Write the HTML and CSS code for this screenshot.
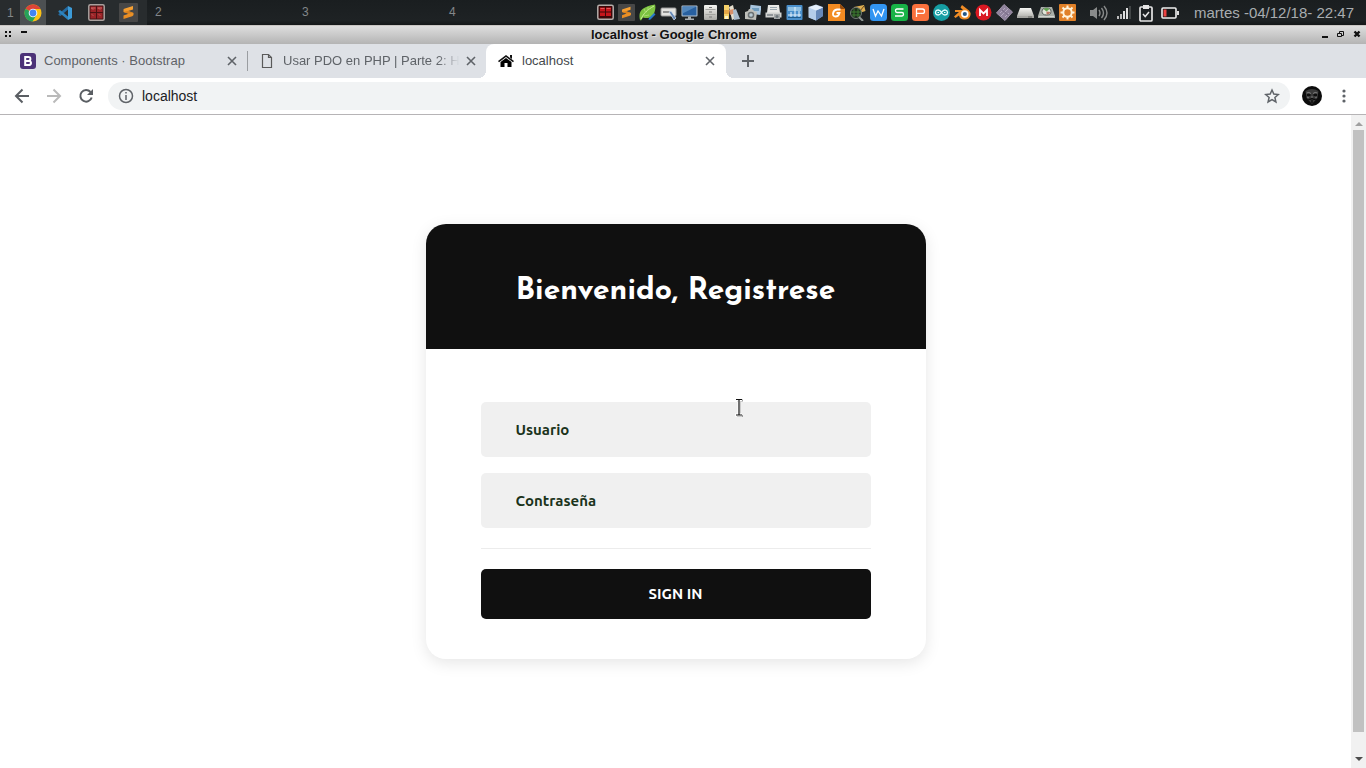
FILE: index.html
```
<!DOCTYPE html>
<html lang="es">
<head>
<meta charset="utf-8">
<title>localhost</title>
<link rel="stylesheet" href="styles.css">
</head>
<body>
<svg class="defs" width="0" height="0" aria-hidden="true">
  <defs>
    <linearGradient id="silver" x1="0" y1="0" x2="0" y2="1"><stop offset="0" stop-color="#f5f5f2"/><stop offset="1" stop-color="#aaaaa6"/></linearGradient>
    <linearGradient id="cubeblue" x1="0" y1="0" x2="1" y2="1"><stop offset="0" stop-color="#e0ecfa"/><stop offset="1" stop-color="#7796c4"/></linearGradient>
    <linearGradient id="orange" x1="0" y1="0" x2="0" y2="1"><stop offset="0" stop-color="#f9a536"/><stop offset="1" stop-color="#e5871f"/></linearGradient>
    <symbol id="redgrid" viewBox="0 0 17 17">
      <rect x=".8" y=".8" width="15.400" height="15.400" rx="1.500" fill="#4a1214" stroke="#a9a19e" stroke-width="1.500"/>
      <path d="M2.500 2.500H8V8H2.500zM9 2.500h5.500V8H9zM2.500 9H8v5.500H2.500zM9 9h5.500v5.500H9z" fill="#9c2428"/>
      <path d="M3 3h4.500v2H3zM9.500 3H14v2H9.500z" fill="#b84648"/>
      <path d="M4 4.500l1 1M11 4.500l1 1M4 10.500l1 1M11 10.500l1 1" stroke="#dc9a96" stroke-width=".8"/>
    </symbol>
    <symbol id="redwide" viewBox="0 0 17 17">
      <rect x=".8" y="1.300" width="15.400" height="13.900" rx="1.500" fill="#3b0809" stroke="#b3adaa" stroke-width="1.500"/>
      <path d="M3 3.500h5v4H3zM9 3.500h5v4H9zM3 8.500h5v3.500H3zM9 8.500h5v3.500H9z" fill="#c5151b"/>
      <path d="M3.500 4h4v1h-4zM9.500 4h4v1h-4z" fill="#e4565a"/>
    </symbol>
    <symbol id="sublime" viewBox="0 0 19 19">
      <rect width="19" height="19" rx="1" fill="#474747"/>
      <path d="M14 3L5.200 5.800Q4.500 6 4.500 6.800V9l5.200 1.700L4.500 12.500V16l8.700-2.800q1.300-.4 1.300-1.400V10L9.200 8.100 14 6.500z" fill="url(#orange)"/>
      <path d="M4.500 9l5.200 1.700 4.800-.7-5.300-1.900z" fill="#d9801d"/>
    </symbol>
    <symbol id="close" viewBox="0 0 10 10"><path d="M1 1l8 8M9 1L1 9" stroke="#5f6368" stroke-width="1.600"/></symbol>
  </defs>
</svg>

<header class="panel">
  <nav class="workspaces" aria-label="Espacios de trabajo">
    <div class="workspace workspace-active">
      <span>1</span>
      <button class="task task-focused" aria-label="Google Chrome">
        <svg width="18" height="18" viewBox="0 0 18 18"><circle cx="9" cy="9" r="8.500" fill="#fbc116"/><path d="M9 9L1.600 4.700A8.500 8.500 0 0 1 16.500 5H9z" fill="#dc4437"/><path d="M1.600 4.700A8.500 8.500 0 0 0 8.500 17.500L12.500 11 9 9z" fill="#27a25a"/><circle cx="9" cy="9" r="4.300" fill="#fff"/><circle cx="9" cy="9" r="3.400" fill="#4285f4"/></svg>
      </button>
      <button class="task" aria-label="Visual Studio Code">
        <svg width="16" height="16" viewBox="0 0 16 16"><path d="M11 1l4 2v10l-4 2z" fill="#3c9bd8"/><path d="M11 1v3.500L3.500 11 1.500 10V9z" fill="#246aa0"/><path d="M1.500 6L3 5l8 6.500V15L1.500 7z" fill="#2d83bd"/></svg>
      </button>
      <button class="task" aria-label="Terminal"><svg width="17" height="17"><use href="#redgrid"/></svg></button>
      <button class="task" aria-label="Sublime Text"><svg width="19" height="19"><use href="#sublime"/></svg></button>
    </div>
    <div class="workspace"><span>2</span></div>
    <div class="workspace"><span>3</span></div>
    <div class="workspace"><span>4</span></div>
  </nav>

  <div class="launchers">
    <svg viewBox="0 0 17 17"><use href="#redwide"/></svg>
    <svg viewBox="0 0 17 17"><use href="#sublime"/></svg>
    <svg viewBox="0 0 17 17"><path d="M1 16C-1 8 2 3 16 .5c1 3 0 6-1 9-2 5-7 5-11 4l-2 3z" fill="#7cc242"/><path d="M2 15C5 9 8 6 15 2" stroke="#c9ee98" fill="none"/><path d="M5 5l2 4M9 3v3M5 12l5-1" stroke="#a5dc6c"/><path d="M10 14l5-5 1.500 1.500-5 5-2 .5z" fill="#2878c8"/></svg>
    <svg viewBox="0 0 17 17"><rect x="1" y="4" width="15" height="8" rx="1" fill="#e3e3e0" stroke="#999"/><path d="M3 8h7" stroke="#777" stroke-width="1.500"/><path d="M9 8l2-1 5 7-2 2z" fill="#6386b5" stroke="#dce5ef" stroke-width=".7"/></svg>
    <svg viewBox="0 0 17 17"><rect x=".5" y="1.500" width="16" height="11" rx="1" fill="#b9c6d2"/><rect x="1.500" y="2.500" width="14" height="9" fill="#2860a0"/><path d="M1.500 2.500h14L1.500 9.500z" fill="#5287bd"/><path d="M7 12.500h3v2h3V16H4v-1.500h3z" fill="#a9adb0"/></svg>
    <svg viewBox="0 0 17 17"><rect x="2" y="1" width="13" height="15" rx="1" fill="url(#silver)"/><path d="M3.500 5.500h10M3.500 10.500h10" stroke="#a5a5a1"/><path d="M7 3.500h3M7 8h3M7 13h3" stroke="#777" stroke-width="1.200"/></svg>
    <svg viewBox="0 0 17 17"><path d="M1 1h5v14H1z" fill="#f5d16a"/><path d="M1 6h5v4H1z" fill="#e5a848"/><path d="M6 3l4-2 3 13-4 2z" fill="#e6dfcf"/><path d="M6 6l5-1 1 4-5 2z" fill="#d8906a"/><path d="M10 6l3-1 4 10-6 1z" fill="#a9bacb"/><path d="M2 12h3v3H2z" fill="#fff4c5"/></svg>
    <svg viewBox="0 0 17 17"><rect x="6" y="1" width="11" height="9" fill="#a8c5de" transform="rotate(7 9 5)"/><path d="M8 4h7v3H8z" fill="#6e9cbe"/><path d="M1 8l3-1 1-2 4 .5 1 1.500 3 1-1 8-11-1z" fill="#bebfba"/><circle cx="7" cy="11" r="3.300" fill="#6b7173"/><circle cx="7" cy="11" r="1.800" fill="#b9cbd4"/></svg>
    <svg viewBox="0 0 17 17"><path d="M3 1h11l1 8H2z" fill="#e9e9e6"/><path d="M5 3.500h7M5 5.500h7" stroke="#9ba8b0"/><path d="M.5 8.500h16v5H.5z" fill="#d1d2d0"/><path d="M2 11h6" stroke="#7b8287" stroke-width="1.500"/><path d="M9 10h6v5H9z" fill="#a4a8a9"/><circle cx="12" cy="12.500" r="1.500" fill="#6d767b"/></svg>
    <svg viewBox="0 0 17 17"><rect x=".5" y="1" width="16" height="15" rx="1" fill="#4a90cc"/><path d="M2 3h13v4H2z" fill="#90c1e4"/><path d="M2 11h13M5 14V8M9 14V3M13 14V7" stroke="#e6f3fd"/><path d="M2 13.500h13" stroke="#225d8d"/></svg>
    <svg viewBox="0 0 17 17"><path d="M1.500 3L9 .5 16 3v9l-7 4.500-7.500-3z" fill="url(#cubeblue)"/><path d="M2 3.500l7 3v10L2 13.500z" fill="#b5cdea"/><path d="M9 6.500l7-3V12l-7 4.500z" fill="#6688b9"/><path d="M2 3.500l7-2.500 7 2.500-7 3z" fill="#e5effb"/></svg>
    <svg viewBox="0 0 17 17"><path d="M0 0h12l5 5v12H0z" fill="#f28b22"/><path d="M12 0l5 5h-5z" fill="#944a0c"/><path d="M12.500 5.500H9Q5.500 6 5 9.500 4.800 12.500 7.500 12.500q3.200 0 4-3.500H8.500" fill="none" stroke="#fff" stroke-width="1.800"/></svg>
    <svg viewBox="0 0 17 17"><path d="M5 3l10-2 1.500 6-9 3z" fill="#dcae51"/><path d="M6 4l5 3 4-5" stroke="#6b4819" fill="none"/><circle cx="7" cy="9" r="5.500" fill="#1c2d1c" stroke="#737c76"/><path d="M5 5v8M9 5v8M2 8h10M3 11h8" stroke="#3f7e30"/><path d="M10 13l4 4" stroke="#909894" stroke-width="2"/></svg>
    <svg viewBox="0 0 17 17"><rect width="17" height="17" rx="3.500" fill="#3295f2"/><path d="M3 5l2.500 7L8 7l3.500 5L14 5" fill="none" stroke="#fff" stroke-width="1.300"/></svg>
    <svg viewBox="0 0 17 17"><rect width="17" height="17" rx="3.500" fill="#18b347"/><path d="M12.500 5H6q-1.500 0-1.500 1.700T6 8.500h5q1.500 0 1.500 1.700T11 12H4" fill="none" stroke="#fff" stroke-width="1.300"/></svg>
    <svg viewBox="0 0 17 17"><rect width="17" height="17" rx="3.500" fill="#fa713d"/><path d="M4.500 13V5h6q2 0 2 2.200t-2 2.200h-6" fill="none" stroke="#fff" stroke-width="1.300"/></svg>
    <svg viewBox="0 0 17 17"><circle cx="8.500" cy="8.500" r="8.500" fill="#159da3"/><path d="M8.500 8.500C6 4.500 2.500 6 2.500 8.500s3.500 4 6 0 6-2.500 6 0-3.500 4-6 0z" fill="none" stroke="#e9ffff" stroke-width="1.300"/><path d="M4.500 8.500h1.500M11 8.500h1.500" stroke="#fff"/></svg>
    <svg viewBox="0 0 17 17"><path d="M8 1l7 5.500q2 2 1.500 4.500-1 4.500-6 4.500T5 11.500L1.500 14 0 12.500 5 8H1V6h8L6.500 3.500z" fill="#ef8b25"/><circle cx="10.800" cy="10" r="3.700" fill="#fff"/><circle cx="10.800" cy="10" r="2.100" fill="#265787"/></svg>
    <svg viewBox="0 0 17 17"><circle cx="8.500" cy="8.500" r="8" fill="#da1822"/><path d="M5 12V6l3.500 3.500L12 6v6" fill="none" stroke="#fff" stroke-width="1.800"/></svg>
    <svg viewBox="0 0 17 17"><path d="M8 .5L16.500 8 9 16.500.5 9z" fill="#8f829c" stroke="#a194ab"/><path d="M4 9l5-5M5 12l7-7M9 13l4-4" stroke="#b5a9c0"/><path d="M6 6l6 5" stroke="#766984"/></svg>
    <svg viewBox="0 0 17 17"><path d="M3 4h11l3 8v2H0v-2z" fill="url(#silver)"/><path d="M0 12h17v2H0z" fill="#a5a5a1"/><path d="M11 13h4" stroke="#60625f"/></svg>
    <svg viewBox="0 0 17 17"><path d="M3 3h11l3 9v2H0v-2z" fill="#a9afa8"/><ellipse cx="8.500" cy="7.500" rx="4.500" ry="3.500" fill="#e1e6d9" stroke="#5e6360"/><path d="M8.500 7.500L5.500 5q3-2 6 0z" fill="#62a551"/><path d="M8.500 7.500l4 .5q-1 2.500-4 2.500z" fill="#bc7464"/><path d="M1 12.500h15" stroke="#d2d2cf"/></svg>
    <svg viewBox="0 0 17 17"><rect width="17" height="17" rx="1" fill="#e18128"/><circle cx="8.500" cy="8.500" r="4.200" fill="none" stroke="#fff4db" stroke-width="2"/><path d="M8.500 1.500v3M8.500 12.500v3M1.500 8.500h3M12.500 8.500h3M3.500 3.500l2 2M11.500 11.500l2 2M13.500 3.500l-2 2M5.500 11.500l-2 2" stroke="#fff4db" stroke-width="2"/></svg>
  </div>

  <div class="indicators">
    <svg width="20" height="16" viewBox="0 0 20 16"><path d="M1 5h3l4-3v12l-4-3H1z" fill="#898b8b"/><path d="M10 5q2 3 0 6M12.500 3q4 5 0 10M15 1q6 7 0 14" fill="none" stroke="#898b8b" stroke-width="1.400"/></svg>
    <svg width="14" height="14" viewBox="0 0 14 14"><path d="M0 10h2v3H0zM3 8h2v5H3z" fill="#bbb"/><path d="M6 5h2v8H6zM9 2h2v11H9z" fill="#ddd"/><path d="M12 0h2v13h-2z" fill="#414546"/></svg>
    <svg width="14" height="18" viewBox="0 0 14 18"><rect x="1" y="3" width="12" height="14" rx="1" fill="none" stroke="#e5e5e5" stroke-width="1.700"/><path d="M4 1h6v4H4z" fill="#e5e5e5"/><path d="M4 10l2.200 2.500L10 8" fill="none" stroke="#e5e5e5" stroke-width="1.500"/></svg>
    <svg width="18" height="12" viewBox="0 0 18 12"><rect x="1" y="1" width="14" height="10" rx="1" fill="#171a1b" stroke="#eee" stroke-width="1.600"/><path d="M2.500 2.500h3v7h-3z" fill="#ec4241"/><path d="M16 4h2v4h-2z" fill="#ddd"/></svg>
  </div>
  <time class="clock">martes -04/12/18- 22:47</time>
</header>

<div class="titlebar">
  <div class="window-left"><svg width="30" height="12" viewBox="0 0 30 12" fill="#111"><path d="M0 3h2v2H0zM4 3h2v2H4zM0 7h2v2H0zM4 7h2v2H4zM16 3h6v2h-6z"/></svg></div>
  <strong>localhost - Google Chrome</strong>
  <div class="window-right">
    <button aria-label="Minimizar"><svg width="8" height="8"><path d="M1 6h6v2H1z" fill="#111"/></svg></button>
    <button aria-label="Restaurar"><svg width="8" height="8" fill="none" stroke="#111"><path d="M2.500 3V1.500h4v4H5M.5 3.500h4v3h-4z"/></svg></button>
    <button aria-label="Cerrar ventana"><svg width="8" height="8"><path d="M1.500 1.500l5 5M6.500 1.500l-5 5" stroke="#111" stroke-width="2.400"/></svg></button>
  </div>
</div>

<div class="tabs">
  <div class="tab tab-divided">
    <svg width="16" height="16" viewBox="0 0 16 16"><rect width="16" height="16" rx="3" fill="#4c3278"/><path d="M5.200 3.900v8.200h3.300q2.500 0 2.500-2.100T8.500 8H5.200h3q2.200 0 2.200-2.100T8 3.900z" fill="none" stroke="#fff" stroke-width="2"/></svg>
    <button class="tab-title">Components · Bootstrap</button>
    <button class="tab-close" aria-label="Cerrar pestaña"><svg width="10" height="10"><use href="#close"/></svg></button>
  </div>
  <div class="tab">
    <svg width="16" height="16" viewBox="0 0 16 16" fill="none" stroke="#5a5a5a" stroke-width="1.200"><path d="M3.500 1.500h6l3 3v10h-9zM9.500 1.500v3h3"/></svg>
    <button class="tab-title tab-fade">Usar PDO en PHP | Parte 2: H</button>
    <button class="tab-close" aria-label="Cerrar pestaña"><svg width="10" height="10"><use href="#close"/></svg></button>
  </div>
  <div class="tab tab-active">
    <svg width="16" height="16" viewBox="0 0 16 16"><path d="M0 8l8-6 8 6-1 1.300-7-5.200-7 5.200z" fill="#111"/><path d="M12 2h2v4l-2-1.500z" fill="#111"/><path d="M2.500 9L8 5l5.500 4v5H9.500v-4h-3v4h-4z" fill="#000"/></svg>
    <button class="tab-title">localhost</button>
    <button class="tab-close" aria-label="Cerrar pestaña"><svg width="10" height="10"><use href="#close"/></svg></button>
  </div>
  <button class="new-tab" aria-label="Nueva pestaña"><svg width="12" height="12"><path d="M6 0v12M0 6h12" stroke="#5f6368" stroke-width="2"/></svg></button>
</div>

<div class="toolbar">
  <button class="tool" aria-label="Atrás"><svg width="16" height="16" fill="none" stroke="#5a5e63" stroke-width="2"><path d="M15 8H2M8.500 1.500L2 8l6.500 6.500"/></svg></button>
  <button class="tool" aria-label="Adelante"><svg width="16" height="16" fill="none" stroke="#bababa" stroke-width="2"><path d="M1 8h13M7.500 1.500L14 8l-6.500 6.500"/></svg></button>
  <button class="tool" aria-label="Recargar"><svg width="16" height="16"><path d="M12.500 4A5.800 5.800 0 1 0 13.700 9.500" fill="none" stroke="#5a5e63" stroke-width="2"/><path d="M15 1v6H9z" fill="#5a5e63"/></svg></button>
  <div class="omnibox">
    <svg width="16" height="16" fill="none" stroke="#5f6368" stroke-width="1.500"><circle cx="8" cy="8" r="6.500"/><path d="M8 7v5M8 4v1.600"/></svg>
    <input type="text" aria-label="Dirección" value="localhost">
    <button class="star" aria-label="Marcador"><svg width="16" height="16" fill="none" stroke="#5f6368" stroke-width="1.500"><path d="M8 2l1.800 4.100 4.500.4-3.400 3 1 4.400L8 11.600l-3.900 2.300 1-4.400-3.400-3 4.500-.4z"/></svg></button>
  </div>
  <button class="avatar" aria-label="Perfil"><svg width="20" height="20"><circle cx="10" cy="10" r="10" fill="#0c0c0c"/><path d="M3.500 5q6.500-4 13 0l-1 7-5.500 6-5.500-6z" fill="#3a3a3a"/><path d="M4.500 7q2.500-1.500 4.500.5M11 7.500q2-2 4.500-.5" fill="none" stroke="#7b7b7b"/><path d="M5 9h3.500M11.500 9H15" stroke="#020202" stroke-width="1.500"/><path d="M6 13q2 1 4-.5 2 1.500 4 .5M10 14v3" fill="none" stroke="#090909" stroke-width="1.300"/><path d="M5 11l2 1M15 11l-2 1M9 11h2" stroke="#777"/></svg></button>
  <button class="menu" aria-label="Menú"><svg width="4" height="14" fill="#5f6368"><circle cx="2" cy="2" r="1.600"/><circle cx="2" cy="7" r="1.600"/><circle cx="2" cy="12" r="1.600"/></svg></button>
</div>

<div class="viewport">
  <main class="page">
    <form class="card">
      <h1>Bienvenido, Registrese</h1>
      <div class="fields">
        <input class="field" type="text" placeholder="Usuario" aria-label="Usuario">
        <input class="field" type="password" placeholder="Contraseña" aria-label="Contraseña">
        <hr>
        <button class="submit" type="button">SIGN IN</button>
      </div>
      <svg class="pointer" width="10" height="19" viewBox="0 0 10 19"><path d="M3 2.500h6M6 3v14M3 18h6" fill="none" stroke="#999" stroke-width="2"/><path d="M1 1.500h7M5 2v15M1 17h7" fill="none" stroke="#fff" stroke-width="3"/><path d="M2 1.500h6M5 2v15M2 17h6" fill="none" stroke="#111" stroke-width="1.200"/></svg>
    </form>
  </main>
  <div class="scrollbar" aria-hidden="true">
    <svg width="8" height="4"><path d="M0 4l4-4 4 4z" fill="#a0a0a0"/></svg>
    <div class="thumb"></div>
    <svg width="8" height="4"><path d="M0 0h8L4 4z" fill="#4d4d4d"/></svg>
  </div>
</div>
</body>
</html>
```
FILE: styles.css
```
* { box-sizing: border-box; }

body {
  display: flex;
  flex-direction: column;
  height: 100vh;
  margin: 0;
  overflow: hidden;
  background: #fff;
  font-family: "Liberation Sans", Arial, sans-serif;
}

button {
  display: flex;
  align-items: center;
  justify-content: center;
  flex: none;
  padding: 0;
  border: 0;
  background: none;
  font: inherit;
  color: inherit;
}

svg { display: block; flex: none; }
.defs { position: absolute; }

/* Desktop panel */
.panel {
  display: flex;
  align-items: center;
  flex: none;
  height: 25px;
  padding-right: 12px;
  background: linear-gradient(#1a1e20, #1e2224 80%, #141718);
  color: #83878a;
}

.workspaces { display: flex; height: 100%; }

.workspace {
  display: flex;
  align-items: center;
  width: 147px;
  padding: 0 0 2px 8px;
  font-size: 12px;
}

.workspace-active { gap: 6px; padding: 0 0 0 7px; background: #282c2e; }

.task { width: 26px; height: 25px; }
.task-focused { background: #4c5052; }

.launchers { display: flex; gap: 4px; margin-left: auto; }
.launchers svg { width: 17px; height: 17px; }

.indicators {
  display: flex;
  align-items: center;
  gap: 8px;
  margin: 0 15px 0 13px;
}

.clock { font-size: 15px; color: #a9adb0; white-space: nowrap; }

/* Window title */
.titlebar {
  display: grid;
  grid-template-columns: 1fr auto 1fr;
  align-items: center;
  flex: none;
  height: 19px;
  padding: 0 5px 2px;
  border-top: 1px solid #c9c5c2;
  background: linear-gradient(#dedede, #b4b4b4);
  font-size: 13px;
  color: #111;
}

.titlebar strong { padding-right: 18px; text-shadow: 1px 1px 0 #ddd; }
.window-right { display: flex; justify-content: flex-end; gap: 8px; }

/* Browser tabs */
.tabs {
  display: flex;
  flex: none;
  height: 34px;
  padding-left: 8px;
  background: #dee1e6;
  font-size: 13px;
  color: #5f6368;
}

.tab {
  position: relative;
  display: flex;
  align-items: center;
  gap: 8px;
  width: 239px;
  padding: 0 9px 0 12px;
}

.tab-title {
  justify-content: flex-start;
  flex: 1;
  min-width: 0;
  padding-bottom: 2px;
  white-space: nowrap;
}

.tab-fade {
  margin-right: -6px;
  -webkit-mask-image: linear-gradient(90deg, #000 86%, transparent 98%);
  mask-image: linear-gradient(90deg, #000 86%, transparent 98%);
}

.tab-divided::after {
  content: "";
  position: absolute;
  top: 7px;
  right: -1px;
  bottom: 7px;
  width: 1px;
  background: #9a9da1;
}

.tab-active {
  width: 240px;
  padding-right: 10px;
  border-radius: 8px 8px 0 0;
  background: #fff;
  color: #45494d;
}

.tab-active::before,
.tab-active::after {
  content: "";
  position: absolute;
  bottom: 0;
  width: 8px;
  height: 8px;
}

.tab-active::before {
  right: 100%;
  background: radial-gradient(circle at 0 0, #dee1e6 8px, #fff 8px);
}

.tab-active::after {
  left: 100%;
  background: radial-gradient(circle at 100% 0, #dee1e6 8px, #fff 8px);
}

.tab-close { width: 12px; }
.new-tab { width: 28px; margin-left: 8px; }

/* Address bar */
.toolbar {
  display: flex;
  align-items: center;
  flex: none;
  height: 37px;
  padding: 0 14px 0 6px;
  border-bottom: 1px solid #b6b4b6;
}

.tool { width: 32px; height: 32px; }

.omnibox {
  display: flex;
  align-items: center;
  flex: 1;
  gap: 8px;
  height: 28px;
  margin-left: 6px;
  padding: 0 10px;
  border-radius: 14px;
  background: #f1f3f4;
}

.omnibox input {
  flex: 1;
  min-width: 0;
  padding: 0;
  border: 0;
  outline: 0;
  background: none;
  font: 14px "Liberation Sans", Arial, sans-serif;
  color: #202124;
}

.avatar { margin: 0 14px 0 12px; }
.menu { width: 16px; height: 28px; }

/* Page */
.viewport { display: flex; flex: 1; min-height: 0; }

.page {
  display: flex;
  align-items: center;
  justify-content: center;
  flex: 1;
}

.card {
  position: relative;
  width: 100%;
  max-width: 500px;
  border-radius: 20px;
  background: #fff;
  box-shadow: 0 4px 16px rgba(0, 0, 0, .1);
}

.card h1 {
  margin: 0;
  padding: 50px 20px 39px;
  border-radius: 20px 20px 0 0;
  background: #101010;
  font: bold 30px/36px "Josefin Sans", Lato, sans-serif;
  color: #fff;
  text-align: center;
}

.fields {
  display: flex;
  flex-direction: column;
  padding: 53px 55px 40px;
}

.field {
  height: 55px;
  margin-bottom: 16px;
  padding: 0 35px;
  border: 0;
  border-radius: 5px;
  background: #f0f0f0;
  font: bold 15px Ubuntu, "Noto Sans", sans-serif;
  color: #1b331b;
}

.field::placeholder { color: #1b331b; opacity: 1; }

.fields hr {
  width: 100%;
  margin: 4px 0 20px;
  border: 0;
  border-top: 1px solid #ececec;
}

.submit {
  height: 50px;
  padding-bottom: 2px;
  border-radius: 5px;
  background: #101010;
  font: bold 15px Ubuntu, "Noto Sans", sans-serif;
  color: #fff;
}

.pointer { position: absolute; top: 174px; left: 308px; }

.scrollbar {
  display: flex;
  flex-direction: column;
  align-items: center;
  width: 15px;
  padding: 7px 0;
  background: #f1f1f1;
}

.thumb { flex: 1; width: 11px; margin: 4px 0 25px; background: #c1c1c1; }
```
